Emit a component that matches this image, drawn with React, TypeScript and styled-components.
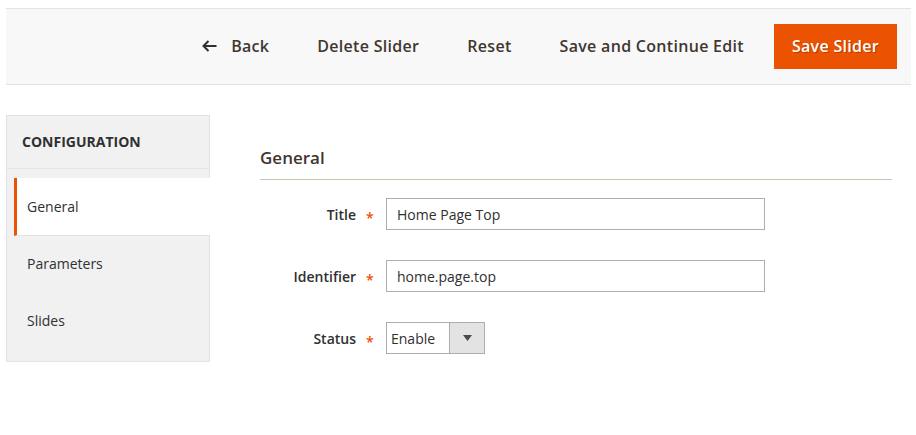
import * as React from 'react'
import styled, { createGlobalStyle } from 'styled-components'

const GlobalStyle = createGlobalStyle`
  html, body {
    margin: 0;
    padding: 0;
    background: #ffffff;
    font-family: 'Open Sans', 'Liberation Sans', sans-serif;
    color: #303030;
  }
`

const Page = styled.div`
  width: 916px;
  padding-top: 8px;
`

const ActionBar = styled.div`
  margin: 0 5px 0 6px;
  height: 75px;
  background: #f8f8f8;
  border-top: 1px solid #e3e3e3;
  border-bottom: 1px solid #e3e3e3;
  display: flex;
  align-items: center;
  justify-content: flex-end;
  padding-right: 14px;
`

const ActionButton = styled.button`
  display: flex;
  align-items: center;
  gap: 14px;
  border: 0;
  background: transparent;
  padding: 0 0 2px;
  margin-left: 48px;
  font-family: inherit;
  font-size: 16px;
  letter-spacing: 0.3px;
  font-weight: 600;
  color: #41362f;
  cursor: pointer;
`

const PrimaryButton = styled.button`
  margin-left: 30px;
  width: 123px;
  height: 45px;
  border: 0;
  padding: 0 0 2px;
  background: #eb5202;
  color: #ffffff;
  font-family: inherit;
  font-size: 16px;
  letter-spacing: 0.3px;
  font-weight: 600;
  text-shadow: 1px 1px 0 rgba(0, 0, 0, 0.25);
  cursor: pointer;
`

const Body = styled.div`
  display: flex;
  align-items: flex-start;
  padding: 30px 24px 0 6px;
  gap: 50px;
`

const Sidebar = styled.div`
  width: 202px;
  background: #f1f1f1;
  border: 1px solid #e3e3e3;
  padding-bottom: 11px;
`

const SidebarTitle = styled.div`
  height: 53px;
  box-sizing: border-box;
  padding: 0 0 2px 15px;
  display: flex;
  align-items: center;
  font-size: 14px;
  font-weight: 700;
  color: #303030;
  border-bottom: 1px solid #e3e3e3;
  margin-bottom: 9px;
`

const TabItem = styled.div<{ $active?: boolean }>`
  margin-left: 7px;
  margin-right: -1px;
  height: ${p => (p.$active ? '58px' : '57px')};
  box-sizing: border-box;
  display: flex;
  align-items: center;
  padding-left: ${p => (p.$active ? '10px' : '13px')};
  padding-bottom: ${p => (p.$active ? '0' : '2px')};
  font-size: 14px;
  color: #303030;
  background: ${p => (p.$active ? '#ffffff' : 'transparent')};
  border-left: ${p => (p.$active ? '3px solid #eb5202' : '0')};
  border-bottom: ${p => (p.$active ? '1px solid #e3e3e3' : '0')};
`

const Main = styled.div`
  flex: 1;
  padding-top: 31px;
`

const Legend = styled.div`
  font-size: 17px;
  font-weight: 600;
  color: #41362f;
  padding-bottom: 10px;
  border-bottom: 1px solid #cac3b4;
  margin-bottom: 18px;
`

const Field = styled.div`
  display: flex;
  align-items: center;
  margin-bottom: 30px;
`

const Label = styled.label`
  width: 126px;
  display: flex;
  justify-content: flex-end;
  align-items: center;
  font-size: 14px;
  font-weight: 600;
  color: #303030;
`

const Required = styled.span`
  color: #eb5202;
  font-size: 14px;
  width: 8px;
  margin-left: 10px;
  margin-right: 12px;
  position: relative;
  top: 3px;
`

const TextInput = styled.input`
  width: 379px;
  height: 32px;
  box-sizing: border-box;
  border: 1px solid #adadad;
  padding: 0 10px;
  font-family: inherit;
  font-size: 14px;
  color: #303030;
  outline: none;
`

const Select = styled.div`
  width: 99px;
  height: 32px;
  box-sizing: border-box;
  border: 1px solid #adadad;
  display: flex;
  font-size: 14px;
  color: #303030;
`

const SelectValue = styled.div`
  flex: 1;
  display: flex;
  align-items: center;
  padding-left: 4px;
`

const SelectArrow = styled.div`
  width: 34px;
  background: #e3e3e3;
  border-left: 1px solid #adadad;
  display: flex;
  align-items: center;
  justify-content: center;
`

export default function App() {
  return (
    <Page>
      <GlobalStyle />
      <ActionBar>
        <ActionButton>
          <svg width="15" height="12" viewBox="0 0 15 12">
            <path
              d="M14.5 6H1.5M6.5 1L1.5 6l5 5"
              fill="none"
              stroke="#303030"
              strokeWidth="2"
            />
          </svg>
          Back
        </ActionButton>
        <ActionButton>Delete Slider</ActionButton>
        <ActionButton>Reset</ActionButton>
        <ActionButton>Save and Continue Edit</ActionButton>
        <PrimaryButton>Save Slider</PrimaryButton>
      </ActionBar>
      <Body>
        <Sidebar>
          <SidebarTitle>CONFIGURATION</SidebarTitle>
          <TabItem $active>General</TabItem>
          <TabItem>Parameters</TabItem>
          <TabItem>Slides</TabItem>
        </Sidebar>
        <Main>
          <Legend>General</Legend>
          <Field>
            <Label>
              Title<Required>*</Required>
            </Label>
            <TextInput defaultValue="Home Page Top" />
          </Field>
          <Field>
            <Label>
              Identifier<Required>*</Required>
            </Label>
            <TextInput defaultValue="home.page.top" />
          </Field>
          <Field>
            <Label>
              Status<Required>*</Required>
            </Label>
            <Select>
              <SelectValue>Enable</SelectValue>
              <SelectArrow>
                <svg width="9" height="6" viewBox="0 0 9 6">
                  <path d="M0 0h9L4.5 6z" fill="#514943" />
                </svg>
              </SelectArrow>
            </Select>
          </Field>
        </Main>
      </Body>
    </Page>
  )
}
